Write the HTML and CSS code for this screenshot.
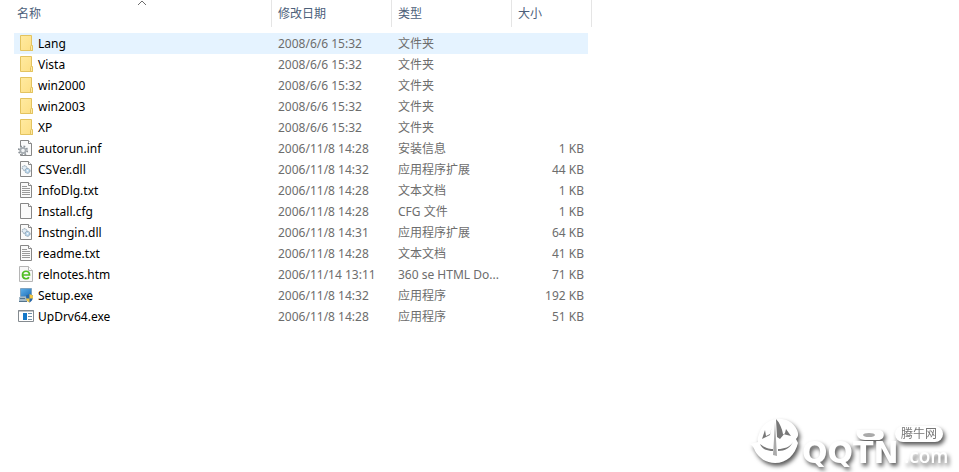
FILE: index.html
```html
<!DOCTYPE html>
<html lang="zh-CN">
<head>
  <meta charset="UTF-8" />
  <meta name="viewport" content="width=device-width, initial-scale=1.0" />
  <title>文件列表</title>
  <link rel="stylesheet" href="styles.css">
</head>
<body>
  <!-- 图标 -->
  <svg class="sprite" aria-hidden="true">
    <defs>
      <linearGradient id="folderFill" x1="0" y1="0" x2="1" y2="1">
        <stop offset="0" stop-color="#ffeaa0" />
        <stop offset="1" stop-color="#fddf85" />
      </linearGradient>
      <linearGradient id="screenFill" x1="0" y1="0" x2="1" y2="1">
        <stop offset="0" stop-color="#5fb0ea" />
        <stop offset="1" stop-color="#1f6fb8" />
      </linearGradient>
    </defs>
    <symbol id="folder" viewBox="0 0 16 16">
      <path d="M2.5.5h11v9.500l1 1v4.500h-12z" fill="url(#folderFill)" stroke="#e3c35f" />
      <path d="M12.500 15.500v-4l1-1.500 1 1v4.500z" fill="#ffe9a3" stroke="#e3c35f" />
    </symbol>
    <symbol id="page" viewBox="0 0 16 16">
      <path d="M2.500.5h8l3 3v12h-11z" fill="#fafafa" stroke="#878787" />
      <path d="M10.500.5v3h3" fill="#fff" stroke="#878787" />
    </symbol>
    <symbol id="text" viewBox="0 0 16 16">
      <use href="#page" />
      <path d="M4 4.500h5M4 6.500h8M4 8.500h8M4 10.500h8M4 12.500h8" stroke="#9a9a9a" />
    </symbol>
    <symbol id="dll" viewBox="0 0 16 16">
      <use href="#page" />
      <circle cx="6.500" cy="7" r="2.300" fill="#e3edf5" stroke="#7f93a3" stroke-dasharray="1.200 .6" />
      <circle cx="9.500" cy="9.800" r="2.500" fill="#b9d6ec" stroke="#7f93a3" stroke-dasharray="1.200 .6" />
      <circle cx="9.500" cy="9.800" r=".8" fill="#fff" />
    </symbol>
    <symbol id="inf" viewBox="0 0 16 16">
      <use href="#page" />
      <circle cx="5" cy="10.500" r="4.200" fill="#fff" stroke="#8b9298" stroke-width="1.800" stroke-dasharray="1.700 1.600" />
      <circle cx="5" cy="10.500" r="2.700" fill="#f2f4f5" stroke="#a5abb0" stroke-width="1.800" />
    </symbol>
    <symbol id="htm" viewBox="0 0 16 16">
      <path d="M1.500.5h9l4 4v11h-13z" fill="#f7f7f7" stroke="#b5b5b5" />
      <path d="M10.500.5v4h4" fill="#fff" stroke="#b5b5b5" />
      <path d="M4.500 9h7c0-5-7-5-7 0 0 4.300 5 4.600 6.500 2.200" fill="none" stroke="#4fbd22" stroke-width="1.700" />
    </symbol>
    <symbol id="setup" viewBox="0 0 16 16">
      <path d="M2.500 1.500h11v8h-11z" fill="url(#screenFill)" stroke="#7fa3c0" />
      <path d="M1 10h8v4H1z" fill="#a5bac9" />
      <path d="M2 11.500h5M1 14.500h8" stroke="#54748c" />
      <path d="M8 8.500l3.500-1.500 3.500 1.500c0 4-1 5.500-3.500 7-2.500-1.500-3.500-3-3.500-7z" fill="#2867a8" />
      <path d="M11.500 7l3.500 1.500v3h-3.500zM8 11.500h3.500v4c-2-1-3.200-2-3.500-4z" fill="#f1c644" />
    </symbol>
    <symbol id="exe" viewBox="0 0 16 16">
      <path d="M.5 2.500h15v11H.5z" fill="#fff" stroke="#858b90" />
      <path d="M0 3h16" stroke="#858b90" />
      <path d="M5 5h4v7H5z" fill="#1377c8" />
      <path d="M10 5.500h4M10 8.500h4M10 11.500h4" stroke="#7391a8" />
    </symbol>
  </svg>

  <table class="file-list">
    <colgroup>
      <col class="col-name"><col class="col-date"><col class="col-type"><col class="col-size">
    </colgroup>
    <thead>
      <tr>
        <th aria-sort="ascending"><button type="button">名称<svg class="sort" viewBox="0 0 10 6" aria-hidden="true"><path d="M1 5l4-4 4 4" /></svg></button></th>
        <th><button type="button">修改日期</button></th>
        <th><button type="button">类型</button></th>
        <th><button type="button">大小</button></th>
      </tr>
    </thead>
    <tbody>
      <tr class="active"><td class="name"><svg class="icon"><use href="#folder" /></svg>Lang</td><td>2008/6/6 15:32</td><td>文件夹</td><td class="size"></td></tr>
      <tr><td class="name"><svg class="icon"><use href="#folder" /></svg>Vista</td><td>2008/6/6 15:32</td><td>文件夹</td><td class="size"></td></tr>
      <tr><td class="name"><svg class="icon"><use href="#folder" /></svg>win2000</td><td>2008/6/6 15:32</td><td>文件夹</td><td class="size"></td></tr>
      <tr><td class="name"><svg class="icon"><use href="#folder" /></svg>win2003</td><td>2008/6/6 15:32</td><td>文件夹</td><td class="size"></td></tr>
      <tr><td class="name"><svg class="icon"><use href="#folder" /></svg>XP</td><td>2008/6/6 15:32</td><td>文件夹</td><td class="size"></td></tr>
      <tr><td class="name"><svg class="icon"><use href="#inf" /></svg>autorun.inf</td><td>2006/11/8 14:28</td><td>安装信息</td><td class="size">1 KB</td></tr>
      <tr><td class="name"><svg class="icon"><use href="#dll" /></svg>CSVer.dll</td><td>2006/11/8 14:32</td><td>应用程序扩展</td><td class="size">44 KB</td></tr>
      <tr><td class="name"><svg class="icon"><use href="#text" /></svg>InfoDlg.txt</td><td>2006/11/8 14:28</td><td>文本文档</td><td class="size">1 KB</td></tr>
      <tr><td class="name"><svg class="icon"><use href="#page" /></svg>Install.cfg</td><td>2006/11/8 14:28</td><td>CFG 文件</td><td class="size">1 KB</td></tr>
      <tr><td class="name"><svg class="icon"><use href="#dll" /></svg>Instngin.dll</td><td>2006/11/8 14:31</td><td>应用程序扩展</td><td class="size">64 KB</td></tr>
      <tr><td class="name"><svg class="icon"><use href="#text" /></svg>readme.txt</td><td>2006/11/8 14:28</td><td>文本文档</td><td class="size">41 KB</td></tr>
      <tr><td class="name"><svg class="icon"><use href="#htm" /></svg>relnotes.htm</td><td>2006/11/14 13:11</td><td>360 se HTML Do...</td><td class="size">71 KB</td></tr>
      <tr><td class="name"><svg class="icon"><use href="#setup" /></svg>Setup.exe</td><td>2006/11/8 14:32</td><td>应用程序</td><td class="size">192 KB</td></tr>
      <tr><td class="name"><svg class="icon"><use href="#exe" /></svg>UpDrv64.exe</td><td>2006/11/8 14:28</td><td>应用程序</td><td class="size">51 KB</td></tr>
    </tbody>
  </table>

  <!-- 右下角水印 -->
  <svg class="watermark" viewBox="0 0 214 62" role="img" aria-label="腾牛网 QQTN.com">
    <g class="mark">
      <path d="M14 24C19 6 44 3 52 20c2 4 1 7-1 9l2 4c-3 12-11 20-23 20-9 0-16-5-20-12-1-3-2-5-5-7l8-2c-1-3 0-5 1-8z" />
      <path d="M112 20h22c6 0 7 10-1 10h-13c-6 0-10-5-8-10z" />
      <rect x="150" y="16" width="48" height="16" rx="8" />
      <text x="57" y="53" class="brand">QQTN</text>
      <text x="159" y="53" class="domain">.com</text>
    </g>
    <g class="cut">
      <path d="M30 9c-3 5-4 11-5 16l-8 4 3-9 1 6 4-2c1-4 2-10 5-15z" />
      <path d="M31 9c4 4 6 10 7 15l8 2-5-7-1 4-5 6-3-2z" />
      <path d="M15 34c5 4 9 5 13 5v2c-6 0-11-2-13-7z" />
      <path d="M48 32c-3 5-9 7-15 7v2c7 0 12-3 15-9z" />
      <path d="M30 12l2 34-4-1 1-16z" class="soft" />
      <ellipse cx="124" cy="25" rx="6" ry="2" class="soft" />
    </g>
    <text x="156" y="28" class="cn">腾牛网</text>
  </svg>
</body>
</html>
```
FILE: styles.css
```css
body { margin: 0; background: #fff; font: 12px/21px "Noto Sans", "Noto Sans CJK SC", sans-serif; color: #6d6d6d; }
.sprite { position: absolute; width: 0; height: 0; }

.file-list { margin-left: 14px; width: 578px; table-layout: fixed; border-collapse: separate; border-spacing: 0; }
.col-date, .col-type { width: 120px; }
.col-size { width: 80px; }

th { padding: 0 0 6px; font-weight: normal; }
th button { position: relative; display: block; width: 100%; height: 27px; padding: 0 6px; border: none; border-right: 1px solid #e5e5e5; background: none; font: inherit; color: #4c607a; text-align: left; }
th:first-child button { padding-left: 3px; }
.sort { position: absolute; top: 0; left: 50%; width: 10px; height: 6px; margin-left: -6px; fill: none; stroke: #6d6d6d; }

td { height: 21px; padding: 0 0 0 6px; white-space: nowrap; }
.name { padding-left: 4px; color: #000; }
.icon { width: 16px; height: 16px; margin-right: 4px; vertical-align: -3px; }
.size { padding-right: 4px; border-right: 4px solid transparent; background-clip: padding-box; text-align: right; }
.active td { background-color: #e5f3ff; }

.watermark { position: fixed; right: 0; bottom: 0; width: 214px; height: 62px; }
.mark { fill: #fff; filter: drop-shadow(2px 3px 2px rgba(0, 0, 0, .65)); }
.brand { font: bold 30px "DejaVu Sans", sans-serif; }
.domain { font: 600 19px "Open Sans", sans-serif; }
.cut { fill: #777; filter: blur(.6px); }
.soft { fill: #aaa; }
.cn { font: 12px "Noto Sans CJK SC", sans-serif; fill: #777; }
```
